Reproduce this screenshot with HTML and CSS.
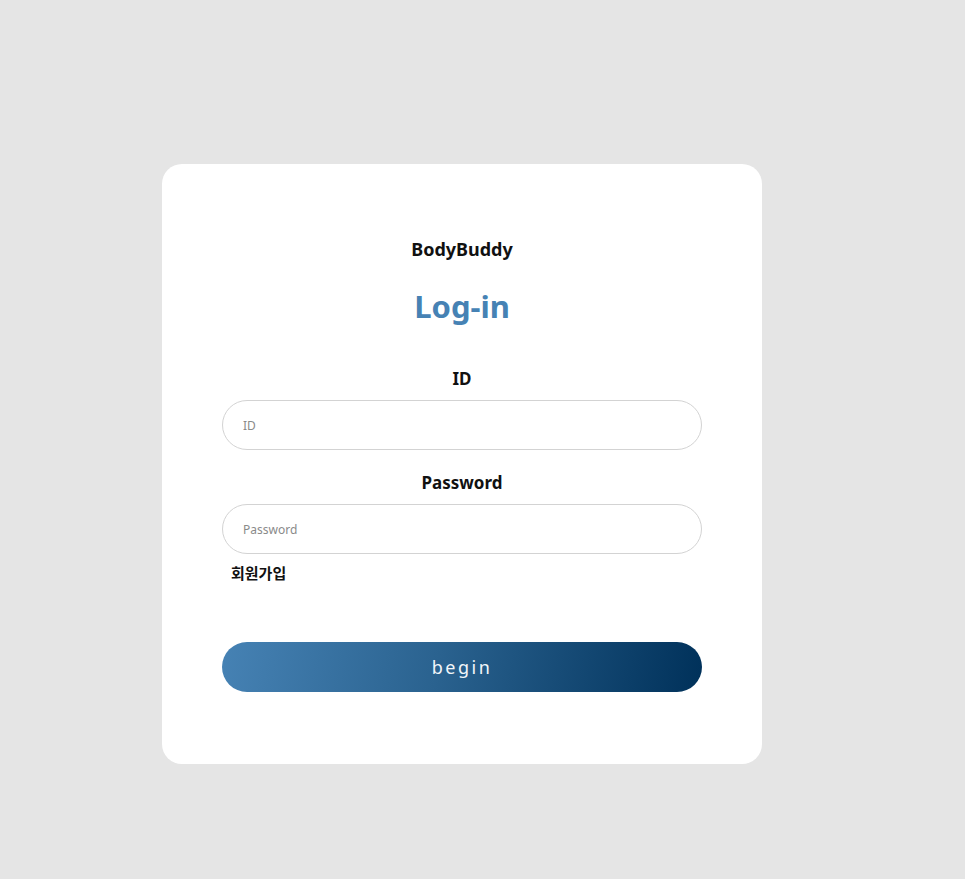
FILE: index.html
```html
<!DOCTYPE html>
<html lang="ko">
<head>
  <meta charset="UTF-8">
  <title>BodyBuddy Log-in</title>
  <link rel="stylesheet" href="styles.css">
</head>
<body>
  <div class="login-card">
    <div class="brand">BodyBuddy</div>
    <h1 class="login-title">Log-in</h1>
    <form class="login-form">
      <label class="field-label" for="user-id">ID</label>
      <input class="field-input" id="user-id" type="text" placeholder="ID">
      <label class="field-label" for="user-pw">Password</label>
      <input class="field-input" id="user-pw" type="password" placeholder="Password">
      <a class="signup-link" href="#">회원가입</a>
      <button class="begin-btn" type="button">begin</button>
    </form>
  </div>
</body>
</html>
```

FILE: styles.css
```css
html, body {
  margin: 0;
  padding: 0;
  height: 100%;
}
body {
  background: #e5e5e5;
  font-family: "Noto Sans", "Noto Sans CJK KR", sans-serif;
  padding: 164px 0 0 162px;
  box-sizing: border-box;
}
.login-card {
  width: 600px;
  height: 600px;
  box-sizing: border-box;
  background: #fff;
  border-radius: 20px;
  padding: 70px 60px 0 60px;
  text-align: center;
}
.brand {
  font-size: 18px;
  font-weight: bold;
  color: #111;
  line-height: 30px;
}
.login-title {
  margin: 22px 0 0 0;
  font-size: 31px;
  line-height: 40px;
  color: #4682b4;
  font-weight: bold;
}
.login-form {
  display: flex;
  flex-direction: column;
  margin-top: 41px;
}
.field-label {
  font-size: 17px;
  font-weight: bold;
  color: #111;
  line-height: 24px;
  margin-bottom: 9px;
}
.field-input {
  height: 50px;
  box-sizing: border-box;
  border: 1px solid #d3d3d3;
  border-radius: 25px;
  padding: 0 20px;
  font-family: "Noto Sans", sans-serif;
  font-size: 12px;
  outline: none;
  margin-bottom: 21px;
}
.field-input::placeholder {
  color: #8a8a8a;
}
.field-input:last-of-type {
  margin-bottom: 8px;
}
.signup-link {
  align-self: flex-start;
  margin-left: 9px;
  font-size: 15px;
  font-weight: bold;
  color: #111;
  text-decoration: none;
  line-height: 22px;
}
.begin-btn {
  margin-top: 58px;
  height: 50px;
  border: none;
  border-radius: 25px;
  background: linear-gradient(100deg, #4682b4 0%, #2a628f 45%, #00315a 100%);
  color: #f2f6fa;
  font-family: "Noto Sans", sans-serif;
  font-size: 18px;
  letter-spacing: 2.5px;
  cursor: pointer;
}
```
